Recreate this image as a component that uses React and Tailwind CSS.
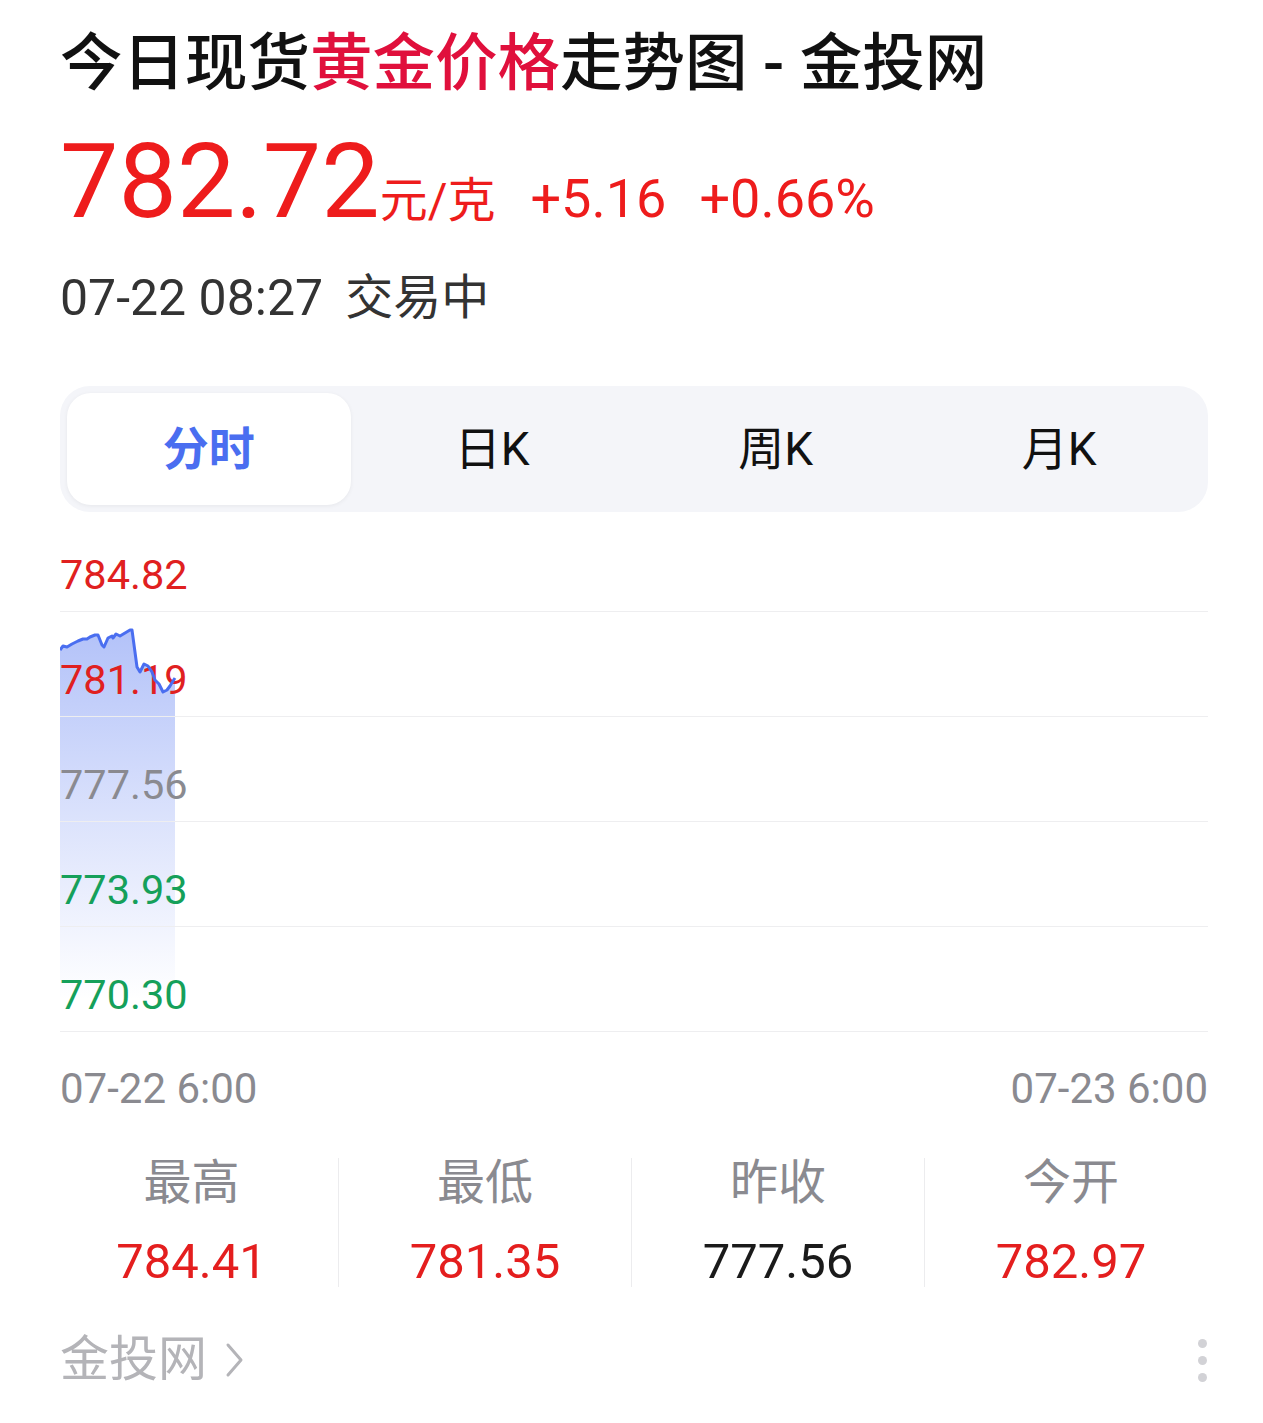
import React from 'react';

const FONT = { fontFamily: 'Roboto, "Noto Sans CJK SC", sans-serif' };

const linePoints = [
  [60, 650], [63, 646], [67, 647], [72, 644], [78, 641], [83, 639], [87, 639], [90, 637],
  [95, 635], [98, 635], [102, 645], [104, 647], [108, 638], [112, 636], [113, 638], [116, 634],
  [120, 636], [125, 633], [130, 630], [132, 630], [137, 667], [140, 672], [144, 664], [148, 666],
  [152, 672], [155, 680], [159, 684], [163, 692], [167, 690], [170, 686], [173, 681], [175, 678],
];

const CHART_TOP = 530;
const CHART_LEFT = 60;

const pts = linePoints.map(([x, y]) => [x - CHART_LEFT, y - CHART_TOP]);
const linePath = pts.map(([x, y], i) => `${i === 0 ? 'M' : 'L'}${x} ${y}`).join(' ');
const areaPath = `${linePath} L${pts[pts.length - 1][0]} 470 L0 470 Z`;

const yLabels = [
  { v: '784.82', c: 'text-[#e02020]', h: 'h-[82px]' },
  { v: '781.19', c: 'text-[#e02020]', h: 'h-[105px]' },
  { v: '777.56', c: 'text-[#8a8a90]', h: 'h-[105px]' },
  { v: '773.93', c: 'text-[#15a05a]', h: 'h-[105px]' },
  { v: '770.30', c: 'text-[#15a05a]', h: 'h-[105px]' },
];

const stats = [
  { label: '最高', value: '784.41', color: 'text-[#e41e1e]' },
  { label: '最低', value: '781.35', color: 'text-[#e41e1e]' },
  { label: '昨收', value: '777.56', color: 'text-[#1a1a1a]' },
  { label: '今开', value: '782.97', color: 'text-[#e41e1e]' },
];

const tabs = ['分时', '日K', '周K', '月K'];

export default function App() {
  return (
    <div className="w-[1263px] min-h-[1423px] bg-white" style={FONT}>
      <div className="ml-[60px] w-[1148px]">

        {/* Title */}
        <h1 className="pt-[25px] text-[62.5px] leading-[78px] font-medium text-[#111] whitespace-nowrap">
          今日现货<span className="text-[#e0103c]">黄金价格</span>走势图 - 金投网
        </h1>

        {/* Price */}
        <div className="mt-[27px] flex items-baseline h-[104px] leading-[104px] whitespace-nowrap text-[#ee1c1c]">
          <span className="text-[104px]">782.72</span>
          <span className="text-[48px]">元/克</span>
          <span className="ml-[35px] text-[54px]">+5.16</span>
          <span className="ml-[33px] text-[54px]">+0.66%</span>
        </div>

        {/* Time + status */}
        <div className="mt-[38px] flex items-center h-[52px] leading-[52px] text-[#333]">
          <span className="text-[50px]">07-22 08:27</span>
          <span className="ml-[22px] text-[48px]">交易中</span>
        </div>

        {/* Tabs */}
        <div className="mt-[62px] h-[126px] rounded-[30px] bg-[#f4f5f9] p-[7px] grid grid-cols-4">
          {tabs.map((t, i) => (
            <div
              key={t}
              className={`flex items-center justify-center rounded-[24px] text-[46px] ${i === 0 ? 'bg-white shadow-[0_1px_4px_rgba(0,0,0,0.06)] text-[#4a6ef0] font-bold' : 'text-[#111]'}`}
            >
              {t}
            </div>
          ))}
        </div>

        {/* Chart */}
        <div className="relative mt-[18px]">
          <svg className="absolute left-0 top-0" width="1148" height="502" viewBox="0 0 1148 502">
            <defs>
              <linearGradient id="fillGrad" x1="0" y1="0" x2="0" y2="1">
                <stop offset="0%" stopColor="#4a6ef0" stopOpacity="0.42" />
                <stop offset="55%" stopColor="#4a6ef0" stopOpacity="0.18" />
                <stop offset="100%" stopColor="#4a6ef0" stopOpacity="0" />
              </linearGradient>
            </defs>
            <path d={areaPath} fill="url(#fillGrad)" />
          </svg>
          <div className="relative">
            {yLabels.map((l) => (
              <div key={l.v} className={`${l.h} flex items-end pb-[16px] border-b border-[#eeeef0]`}>
                <span className={`text-[41.5px] leading-[40px] ${l.c}`}>{l.v}</span>
              </div>
            ))}
          </div>
          <svg className="absolute left-0 top-0 pointer-events-none" width="1148" height="502" viewBox="0 0 1148 502">
            <path d={linePath} fill="none" stroke="#4a6ef0" strokeWidth="3" strokeLinejoin="round" />
          </svg>
        </div>

        {/* Time axis */}
        <div className="mt-[37px] flex justify-between h-[40px] text-[42px] leading-[40px] text-[#8a8a90]">
          <span>07-22 6:00</span>
          <span>07-23 6:00</span>
        </div>

        {/* Stats */}
        <div className="mt-[49px] ml-[-15px] w-[1172px] grid grid-cols-4">
          {stats.map((s, i) => (
            <div key={s.label} className={`h-[129px] flex flex-col items-center ${i > 0 ? 'border-l border-[#ececee]' : ''}`}>
              <span className="text-[48px] leading-[50px] text-[#8a8a90]">{s.label}</span>
              <span className={`mt-[29px] text-[49px] leading-[50px] ${s.color}`}>{s.value}</span>
            </div>
          ))}
        </div>

        {/* Footer */}
        <div className="mt-[43px] h-[60px] flex items-center justify-between">
          <div className="flex items-center text-[49px] text-[#b4b4b8]">
            <span>金投网</span>
            <svg className="ml-[17px]" width="22" height="38" viewBox="0 0 22 38">
              <path d="M4 4 L17 19 L4 34" fill="none" stroke="#b4b4b8" strokeWidth="3" strokeLinecap="round" strokeLinejoin="round" />
            </svg>
          </div>
          <div className="mr-[1px] flex flex-col items-center gap-[8px]">
            <span className="w-[9px] h-[9px] rounded-full bg-[#d2d2d6]" />
            <span className="w-[9px] h-[9px] rounded-full bg-[#d2d2d6]" />
            <span className="w-[9px] h-[9px] rounded-full bg-[#d2d2d6]" />
          </div>
        </div>

      </div>
    </div>
  );
}
